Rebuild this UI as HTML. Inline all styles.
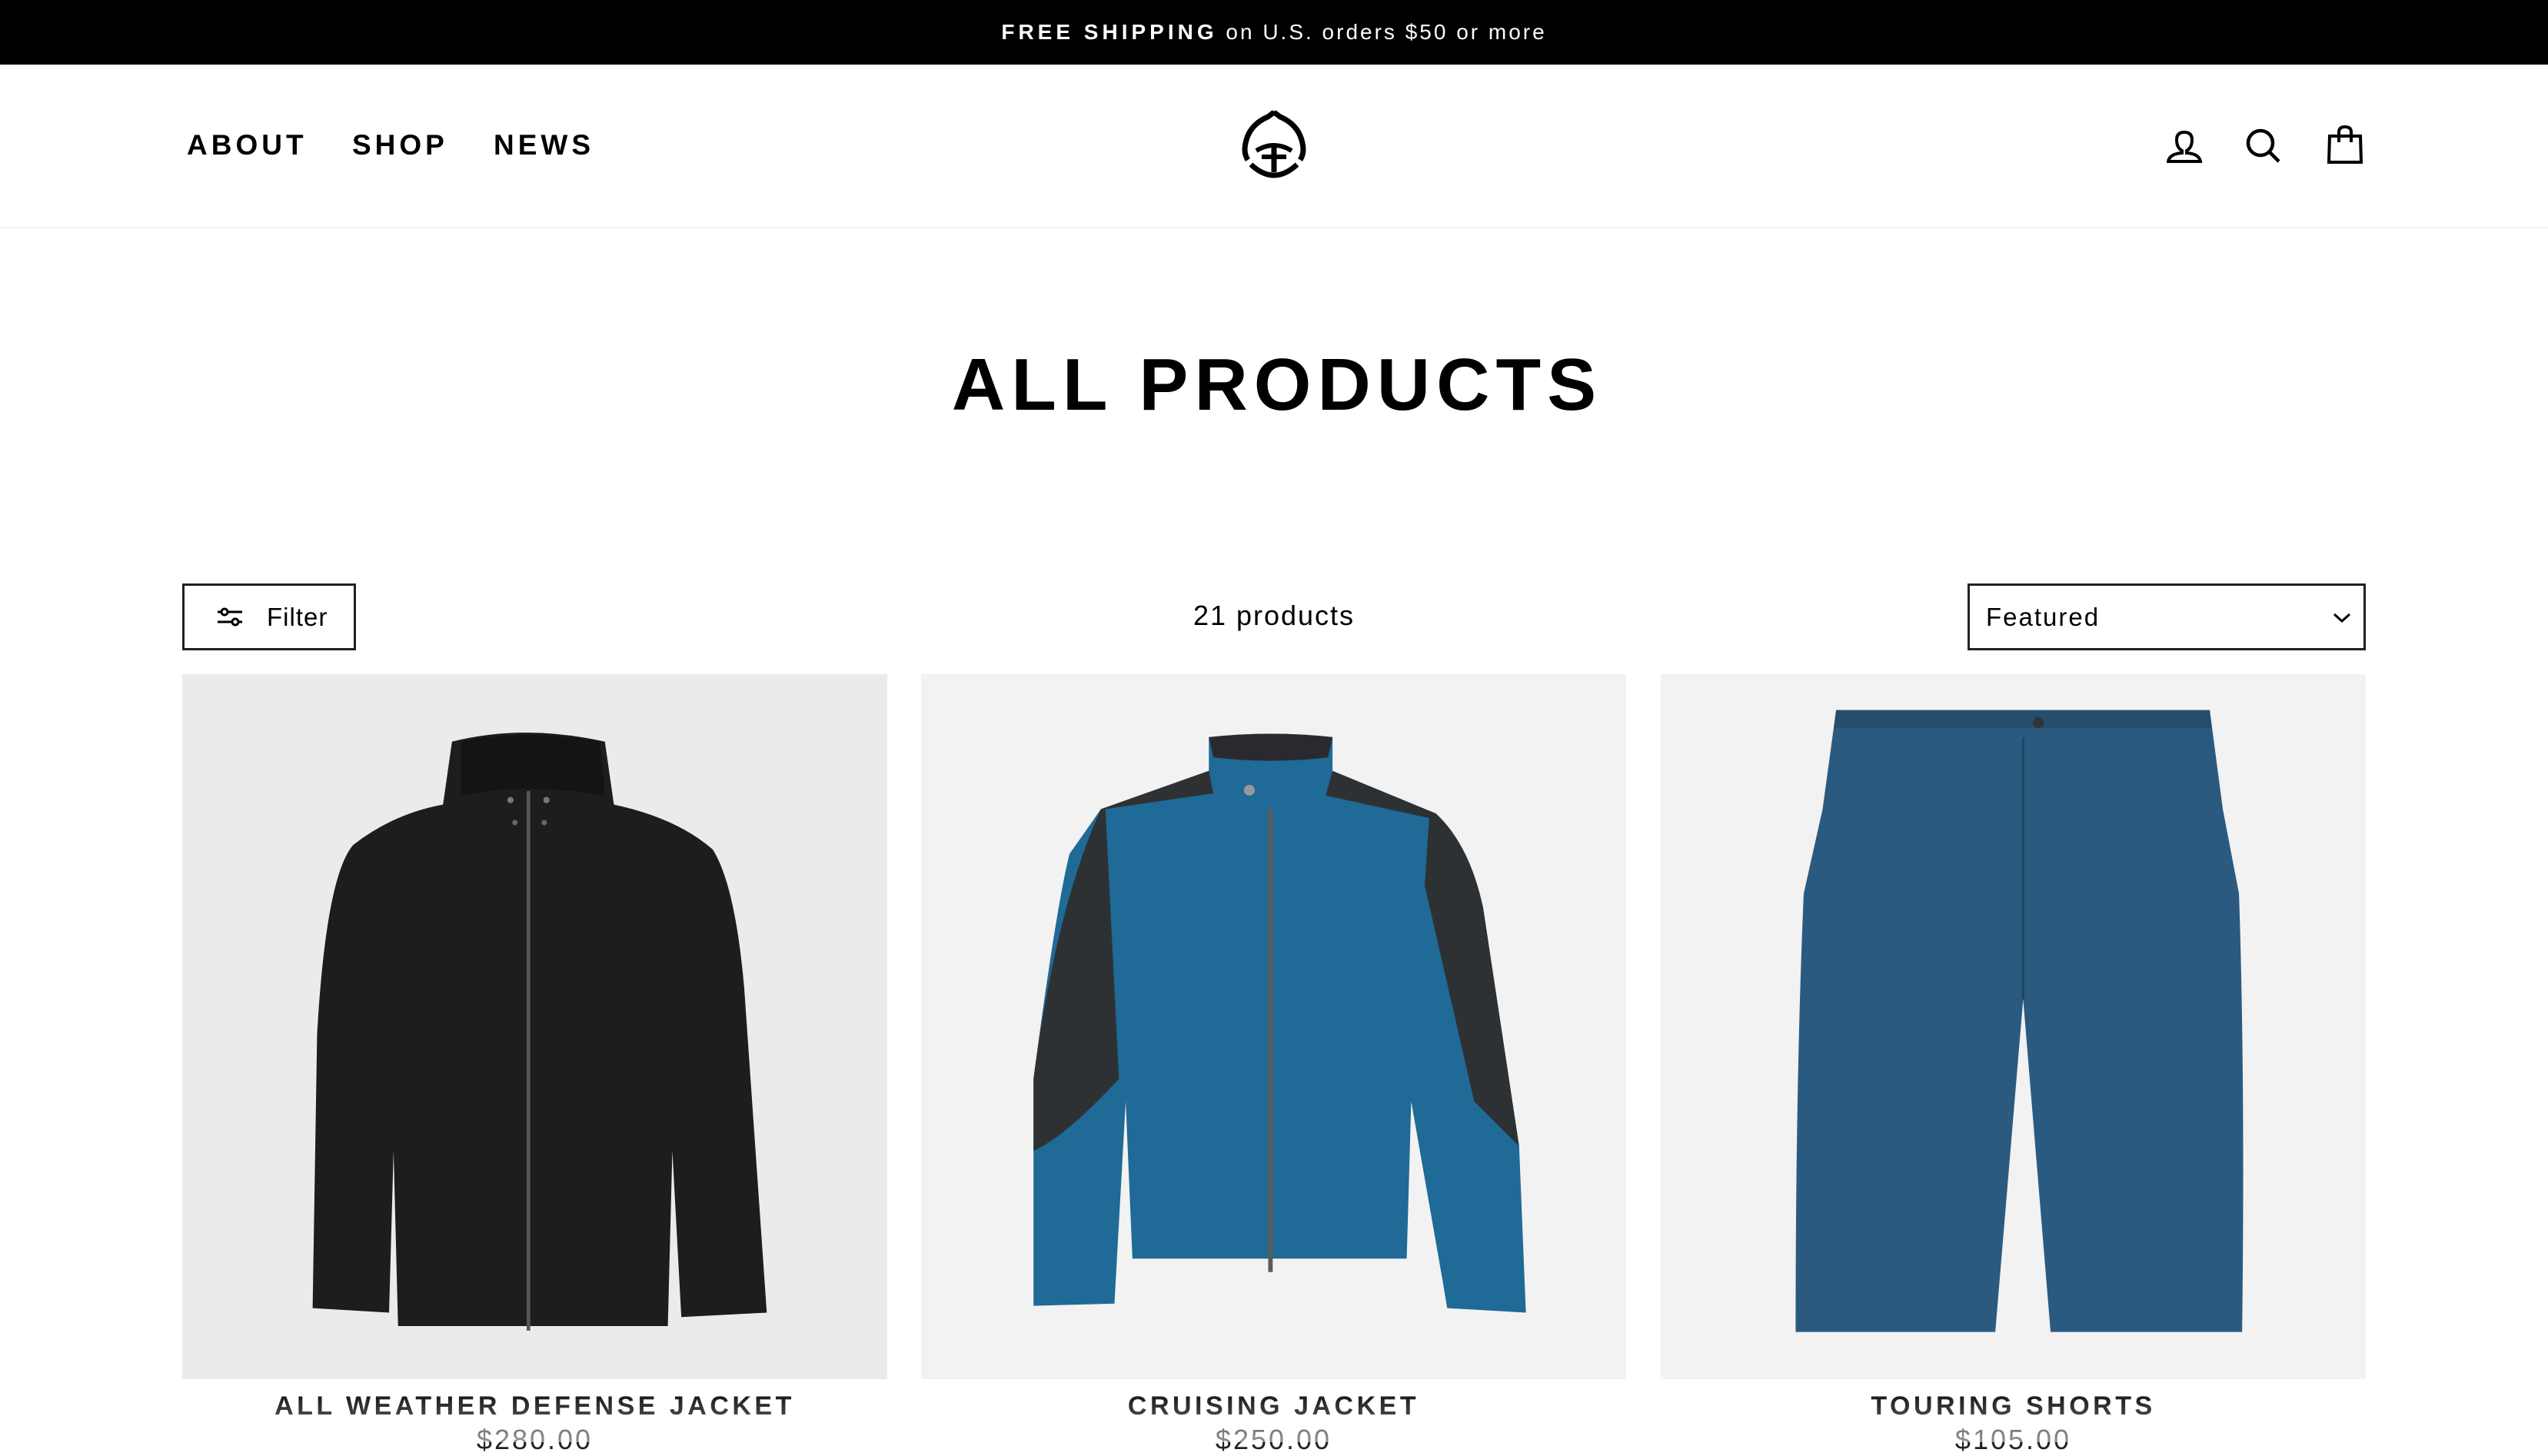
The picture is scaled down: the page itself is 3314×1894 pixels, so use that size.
<!DOCTYPE html>
<html><head><meta charset="utf-8"><style>
*{margin:0;padding:0;box-sizing:border-box}
body{width:3314px;height:1876px;overflow:hidden;background:#fff;font-family:"Liberation Sans",sans-serif;color:#000;position:relative}
.top{position:absolute;left:0;top:0;width:3314px;height:84px;background:#000;color:#fff;font-size:28px;letter-spacing:3px;text-align:center;line-height:84px}
.top b{letter-spacing:5px}
.nav{position:absolute;top:168px;font-size:37px;font-weight:bold;letter-spacing:5px}
.hline{position:absolute;left:0;top:295px;width:3314px;height:2px;background:#f2f2f2}
h1{position:absolute;left:0;width:3314px;text-align:center;top:446px;font-size:96px;font-weight:bold;letter-spacing:8px;padding-left:8px}
.box{position:absolute;border:3px solid #222;height:87px;top:759px;font-size:33px;letter-spacing:2px}
.count{position:absolute;top:780px;left:0;width:3314px;text-align:center;font-size:36px;letter-spacing:2px}
.card{position:absolute;top:877px;width:917px;height:917px}
.card svg{width:917px;height:917px;display:block}
.t{position:absolute;top:1810px;width:917px;text-align:center;font-size:34px;font-weight:bold;letter-spacing:4.5px}
.p{position:absolute;top:1852px;width:917px;text-align:center;font-size:36px;letter-spacing:3px;color:#222}
.fade{position:absolute;left:0;top:1800px;width:3314px;height:76px;background:linear-gradient(rgba(255,255,255,0),rgba(255,255,255,.5))}
</style></head><body>
<div class="top"><b>FREE SHIPPING</b> on U.S. orders $50 or more</div>
<div class="nav" style="left:243px">ABOUT</div>
<div class="nav" style="left:458px">SHOP</div>
<div class="nav" style="left:642px">NEWS</div>
<svg style="position:absolute;left:1613px;top:142px" width="88" height="92" viewBox="0 0 88 92">
<path d="M44 4 L36 10 Q8 22 6 52 Q6 60 10 66" fill="none" stroke="#000" stroke-width="7"/>
<path d="M44 4 L52 10 Q80 22 82 52 Q82 60 78 66" fill="none" stroke="#000" stroke-width="7"/>
<path d="M36 8 L44 2 L52 8 Z" fill="#000"/>
<path d="M14 72 Q44 100 74 72" fill="none" stroke="#000" stroke-width="7"/>
<path d="M21 54 Q44 40 67 54" fill="none" stroke="#000" stroke-width="6"/>
<path d="M28 62 H60" stroke="#000" stroke-width="6"/>
<path d="M44 48 V82" stroke="#000" stroke-width="7"/>
</svg>
<svg style="position:absolute;left:2818px;top:168px" width="46" height="44" viewBox="0 0 46 44">
<path d="M23 4 Q33 4 33 14 Q33 24 26 28 L26 31 Q42 32 44 42 H2 Q4 32 20 31 L20 28 Q13 24 13 14 Q13 4 23 4Z" fill="none" stroke="#000" stroke-width="4"/>
</svg>
<svg style="position:absolute;left:2920px;top:166px" width="50" height="50" viewBox="0 0 50 50">
<circle cx="20" cy="20" r="16" fill="none" stroke="#000" stroke-width="4.5"/>
<path d="M31 31 L44 44" stroke="#000" stroke-width="4.5"/>
</svg>
<svg style="position:absolute;left:3026px;top:163px" width="48" height="52" viewBox="0 0 48 52">
<path d="M4 14 H44 L45 48 H3 Z" fill="none" stroke="#000" stroke-width="4"/>
<path d="M16 22 V9 Q16 2 24 2 Q32 2 32 9 V22" fill="none" stroke="#000" stroke-width="4"/>
</svg>
<div class="hline"></div>
<h1>ALL PRODUCTS</h1>
<div class="box" style="left:237px;width:226px">
<svg style="position:absolute;left:42px;top:27px" width="34" height="28" viewBox="0 0 34 28"><path d="M1 7H33M1 20H33" stroke="#000" stroke-width="3"/><circle cx="10" cy="7" r="4" fill="#fff" stroke="#000" stroke-width="3"/><circle cx="24" cy="20" r="4" fill="#fff" stroke="#000" stroke-width="3"/></svg>
<span style="position:absolute;left:107px;top:22px;letter-spacing:1px">Filter</span></div>
<div class="count">21 products</div>
<div class="box" style="left:2559px;width:518px">
<span style="position:absolute;left:21px;top:22px">Featured</span>
<svg style="position:absolute;left:472px;top:34px" width="24" height="16" viewBox="0 0 24 16"><path d="M2 3 L12 12 L22 3" fill="none" stroke="#000" stroke-width="3"/></svg></div>

<div class="card" style="left:237px;background:#ebebeb">
<svg viewBox="0 0 1568 1568">
<path d="M600 150 Q760 110 940 150 L960 290 Q1100 320 1180 390 Q1230 470 1250 700 L1300 1420 L1110 1430 L1090 1060 L1080 1450 L480 1450 L470 1060 L460 1420 L290 1410 L300 800 Q320 450 380 380 Q470 310 580 290 Z" fill="#1d1d1d"/>
<path d="M620 150 Q760 120 930 150 L940 270 Q760 240 620 270 Z" fill="#141414"/>
<path d="M770 260 V1460" stroke="#555" stroke-width="8"/>
<circle cx="730" cy="280" r="7" fill="#777"/><circle cx="810" cy="280" r="7" fill="#777"/>
<circle cx="740" cy="330" r="6" fill="#666"/><circle cx="805" cy="330" r="6" fill="#666"/>
</svg></div>
<div class="card" style="left:1198px;background:#f2f2f2">
<svg viewBox="0 0 1568 1568">
<path d="M640 140 Q780 125 915 140 L915 215 L1145 310 Q1220 380 1250 520 L1330 1050 L1345 1420 L1170 1410 L1160 1350 L1090 950 L1080 1300 L470 1300 L455 950 L430 1400 L250 1405 L250 900 Q300 520 330 400 L400 300 L640 215 Z" fill="#1f6a96"/>
<path d="M640 140 Q780 125 915 140 L905 185 Q780 200 650 185 Z" fill="#2a2a2e"/>
<path d="M915 215 L1145 310 Q1220 380 1250 520 L1330 1050 Q1280 1000 1230 950 L1120 470 L1130 320 L900 270 Z" fill="#2e3134"/>
<path d="M640 215 L400 300 Q300 520 250 900 L250 1060 Q320 1030 440 900 L410 300 L650 265 Z" fill="#2e3134"/>
<path d="M777 300 V1330" stroke="#5b5b5b" stroke-width="10"/>
<circle cx="730" cy="258" r="12" fill="#999"/>
</svg></div>
<div class="card" style="left:2160px;background:#f2f2f2">
<svg viewBox="0 0 1568 1568">
<path d="M390 80 L1221 80 L1250 300 L1286 488 Q1300 900 1293 1463 L867 1463 L806 723 L744 1463 L300 1463 Q300 900 318 488 L360 300 Z" fill="#2b5a80"/>
<path d="M390 80 L1221 80 L1225 120 L385 120 Z" fill="#244d6e"/>
<path d="M806 140 V723" stroke="#22445f" stroke-width="5"/>
<circle cx="840" cy="108" r="12" fill="#333"/>
</svg></div>
<div class="t" style="left:237px">ALL WEATHER DEFENSE JACKET</div>
<div class="t" style="left:1198px">CRUISING JACKET</div>
<div class="t" style="left:2160px">TOURING SHORTS</div>
<div class="p" style="left:237px">$280.00</div>
<div class="p" style="left:1198px">$250.00</div>
<div class="p" style="left:2160px">$105.00</div>
<div class="fade"></div>
</body></html>
